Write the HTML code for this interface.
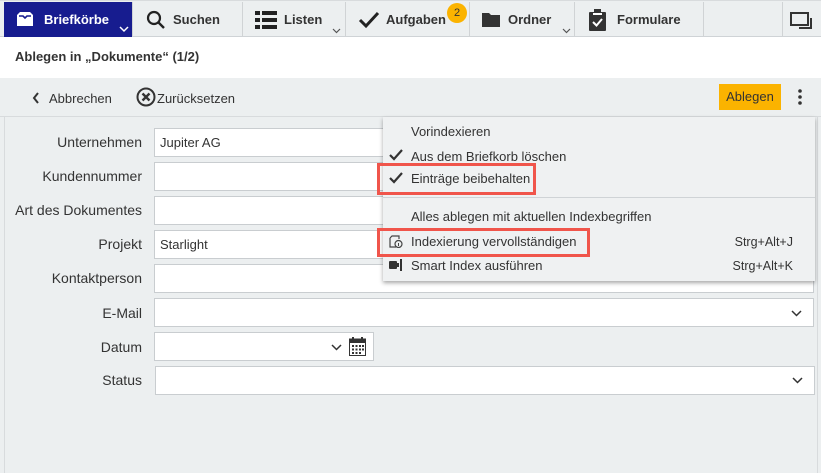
<!DOCTYPE html>
<html><head><meta charset="utf-8"><style>
*{box-sizing:border-box;margin:0;padding:0}
body{width:821px;height:473px;overflow:hidden;font-family:"Liberation Sans",sans-serif;font-size:13px;color:#333;background:#eceff0;position:relative}
.nav{position:absolute;left:0;top:0;width:821px;height:37px;background:#eceff0;border-bottom:1px solid #cfd3d6;border-top:1px solid #d8dbdd}
.tab{position:absolute;top:1px;height:35px;border-right:1px solid #d0d3d5;font-weight:bold;font-size:13px;line-height:35px;color:#333}
.tab svg{position:absolute}
.title{position:absolute;top:37px;left:0;width:821px;height:41px;background:#fff;font-weight:bold;font-size:13px;padding:12px 15px}
.tb{position:absolute;top:78px;left:0;width:821px;height:39px;border-bottom:1px solid #d8dbdd}
.lab{position:absolute;right:679px;font-size:14px;color:#333}
.inp{position:absolute;left:154px;width:660px;height:29px;background:#fff;border:1px solid #c9cdd0;padding:6px 5px;font-size:13px}
.menu{position:absolute;left:383px;top:117px;width:432px;height:164px;background:#eff1f2;box-shadow:0 2px 4px rgba(0,0,0,.35)}
.mi{position:absolute;left:28px;font-size:13px;color:#333}
.sc{position:absolute;right:22px;font-size:12.5px}
.red{position:absolute;border:3px solid #f0554b}
.chk{position:absolute;left:6px}
</style></head><body>
<div class="nav">
 <div class="tab" style="left:4px;width:129px;background:#171c8f;color:#fff;padding-left:40px">Briefkörbe
  <svg style="left:11px;top:9px" width="20" height="17" viewBox="0 0 20 17"><path d="M2 4 L5 1 H15 L18 4 V15 H2Z" fill="#fff"/><path d="M4 5 H8 L10 7 L12 5 H16" stroke="#171c8f" stroke-width="1.6" fill="none"/></svg>
  <svg style="left:115px;top:24px" width="10" height="7"><path d="M1 1 L5 5 L9 1" stroke="#fff" stroke-width="1.5" fill="none"/></svg></div>
 <div class="tab" style="left:133px;width:110px;padding-left:40px">Suchen
  <svg style="left:13px;top:8px" width="20" height="20"><circle cx="8" cy="8" r="6" stroke="#222" stroke-width="2.2" fill="none"/><path d="M12 12 L18 18" stroke="#222" stroke-width="2.4"/></svg></div>
 <div class="tab" style="left:243px;width:103px;padding-left:41px">Listen
  <svg style="left:12px;top:9px" width="22" height="18"><g fill="#222"><rect x="0" y="0" width="5" height="4"/><rect x="7" y="0" width="15" height="4"/><rect x="0" y="7" width="5" height="4"/><rect x="7" y="7" width="15" height="4"/><rect x="0" y="14" width="5" height="4"/><rect x="7" y="14" width="15" height="4"/></g></svg>
  <svg style="left:89px;top:26px" width="9" height="6"><path d="M1 1 L4.5 4.5 L8 1" stroke="#555" stroke-width="1.2" fill="none"/></svg></div>
 <div class="tab" style="left:346px;width:124px;padding-left:40px">Aufgaben
  <svg style="left:12px;top:9px" width="22" height="18"><path d="M2 9 L8 15 L20 2" stroke="#222" stroke-width="3" fill="none"/></svg>
  <div style="position:absolute;left:101px;top:1px;width:20px;height:20px;border-radius:50%;background:#fbb300;color:#333;font-weight:normal;font-size:11px;line-height:20px;text-align:center">2</div></div>
 <div class="tab" style="left:470px;width:105px;padding-left:38px">Ordner
  <svg style="left:12px;top:11px" width="18" height="15"><path d="M0 0 H7 L9 2 H18 V14 H0Z" fill="#333"/></svg>
  <svg style="left:92px;top:26px" width="9" height="6"><path d="M1 1 L4.5 4.5 L8 1" stroke="#555" stroke-width="1.2" fill="none"/></svg></div>
 <div class="tab" style="left:575px;width:129px;padding-left:42px">Formulare
  <svg style="left:14px;top:7px" width="18" height="22"><rect x="0" y="3" width="17" height="19" rx="1" fill="#333"/><rect x="5" y="0" width="7" height="5" fill="#333"/><rect x="4" y="4" width="9" height="2" fill="#fff"/><path d="M4 13 L7.5 16.5 L13 10" stroke="#fff" stroke-width="2" fill="none"/></svg></div>
 <div class="tab" style="left:704px;width:79px"></div>
 <svg style="position:absolute;left:790px;top:11px" width="23" height="17"><rect x="1" y="1" width="17" height="12" stroke="#333" stroke-width="2" fill="none"/><path d="M21 6 V16 H9" stroke="#333" stroke-width="2" fill="none"/></svg>
</div>
<div class="title">Ablegen in „Dokumente“ (1/2)</div>
<div class="tb">
 <svg style="position:absolute;left:32px;top:14px" width="8" height="12"><path d="M6 1 L2 6 L6 11" stroke="#333" stroke-width="2" fill="none"/></svg>
 <span style="position:absolute;left:49px;top:13px">Abbrechen</span>
 <svg style="position:absolute;left:136px;top:9px" width="20" height="20"><circle cx="10" cy="10" r="8.5" stroke="#333" stroke-width="2" fill="none"/><path d="M6.5 6.5 L13.5 13.5 M13.5 6.5 L6.5 13.5" stroke="#333" stroke-width="2.4"/></svg>
 <span style="position:absolute;left:157px;top:13px">Zurücksetzen</span>
 <div style="position:absolute;left:719px;top:6px;width:62px;height:26px;background:#fbb300;line-height:26px;text-align:center;font-size:13px">Ablegen</div>
 <svg style="position:absolute;left:797px;top:11px" width="6" height="16"><circle cx="3" cy="2" r="1.8" fill="#333"/><circle cx="3" cy="8" r="1.8" fill="#333"/><circle cx="3" cy="14" r="1.8" fill="#333"/></svg>
</div>
<div style="position:absolute;left:4px;top:117px;width:1px;height:356px;background:#d8dbdd"></div>
<div style="position:absolute;left:817px;top:117px;width:1px;height:356px;background:#d8dbdd"></div>

<div class="lab" style="top:134px">Unternehmen</div><div class="inp" style="top:128px">Jupiter AG</div>
<div class="lab" style="top:168px">Kundennummer</div><div class="inp" style="top:162px"></div>
<div class="lab" style="top:202px">Art des Dokumentes</div><div class="inp" style="top:196px"></div>
<div class="lab" style="top:236px">Projekt</div><div class="inp" style="top:230px">Starlight</div>
<div class="lab" style="top:270px">Kontaktperson</div><div class="inp" style="top:264px"></div>
<div class="lab" style="top:305px">E-Mail</div><div class="inp" style="top:298px"></div>
<svg style="position:absolute;left:791px;top:310px" width="11" height="7"><path d="M1 1 L5.5 5.5 L10 1" stroke="#333" stroke-width="1.5" fill="none"/></svg>
<div class="lab" style="top:339px">Datum</div><div class="inp" style="top:332px;width:220px"></div>
<svg style="position:absolute;left:331px;top:344px" width="11" height="7"><path d="M1 1 L5.5 5.5 L10 1" stroke="#333" stroke-width="1.5" fill="none"/></svg>
<svg style="position:absolute;left:349px;top:337px" width="17" height="19"><rect x="0.5" y="2" width="16" height="16.5" fill="#fff" stroke="#333"/><rect x="0" y="2" width="17" height="4" fill="#333"/><rect x="3" y="0" width="2" height="3" fill="#333"/><rect x="12" y="0" width="2" height="3" fill="#333"/><g fill="#333"><rect x="3" y="8" width="2" height="2"/><rect x="6.5" y="8" width="2" height="2"/><rect x="10" y="8" width="2" height="2"/><rect x="13" y="8" width="2" height="2"/><rect x="3" y="11.5" width="2" height="2"/><rect x="6.5" y="11.5" width="2" height="2"/><rect x="10" y="11.5" width="2" height="2"/><rect x="13" y="11.5" width="2" height="2"/><rect x="3" y="15" width="2" height="2"/><rect x="6.5" y="15" width="2" height="2"/><rect x="10" y="15" width="2" height="2"/></g></svg>
<div class="lab" style="top:372px">Status</div><div class="inp" style="top:366px;left:155px"></div>
<svg style="position:absolute;left:792px;top:377px" width="11" height="7"><path d="M1 1 L5.5 5.5 L10 1" stroke="#333" stroke-width="1.5" fill="none"/></svg>

<div class="menu">
 <div class="mi" style="top:7px">Vorindexieren</div>
 <svg class="chk" style="top:32px" width="14" height="12"><path d="M1 6 L5 10 L13 1" stroke="#333" stroke-width="2.2" fill="none"/></svg>
 <div class="mi" style="top:32px">Aus dem Briefkorb löschen</div>
 <svg class="chk" style="top:55px" width="14" height="12"><path d="M1 6 L5 10 L13 1" stroke="#333" stroke-width="2.2" fill="none"/></svg>
 <div class="mi" style="top:54px">Einträge beibehalten</div>
 <div style="position:absolute;left:0;right:0;top:80px;height:1px;background:#cfd3d6"></div>
 <div class="mi" style="top:92px">Alles ablegen mit aktuellen Indexbegriffen</div>
 <svg style="position:absolute;left:6px;top:118px" width="14" height="13"><path d="M1 3 L3 1 H10 V4 M1 3 V12 H7" stroke="#444" stroke-width="1.2" fill="none"/><circle cx="9.5" cy="9" r="3.5" stroke="#444" stroke-width="1.2" fill="none"/><path d="M9.5 8 V11" stroke="#444"/></svg>
 <div class="mi" style="top:117px">Indexierung vervollständigen</div><div class="sc" style="top:118px">Strg+Alt+J</div>
 <svg style="position:absolute;left:6px;top:142px" width="14" height="12"><rect x="0" y="2" width="8" height="8" rx="1" fill="#333"/><rect x="8" y="4" width="2" height="4" fill="#333"/><rect x="11" y="0" width="2" height="12" fill="#333"/></svg>
 <div class="mi" style="top:141px">Smart Index ausführen</div><div class="sc" style="top:142px">Strg+Alt+K</div>
</div>
<div class="red" style="left:377px;top:163px;width:159px;height:32px"></div>
<div class="red" style="left:377px;top:228px;width:213px;height:29px"></div>
</body></html>
